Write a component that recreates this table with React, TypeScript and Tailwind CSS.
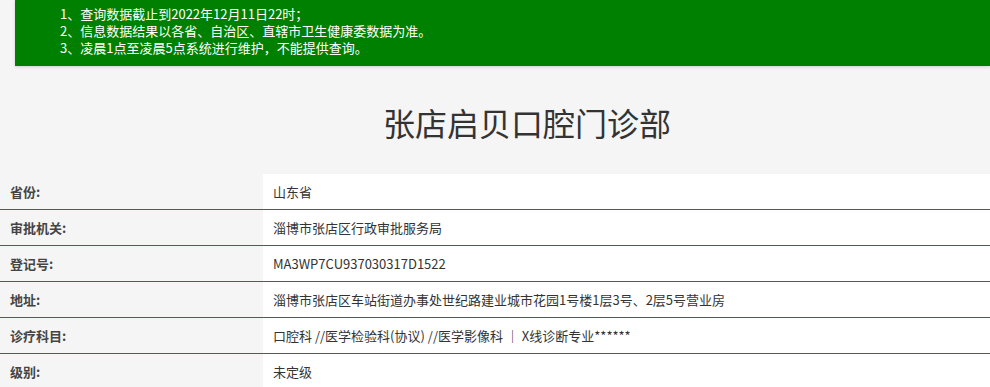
import React from 'react';

const notes = [
  '1、查询数据截止到2022年12月11日22时；',
  '2、信息数据结果以各省、自治区、直辖市卫生健康委数据为准。',
  '3、凌晨1点至凌晨5点系统进行维护，不能提供查询。',
];

const rows = [
  { label: '省份:', value: '山东省' },
  { label: '审批机关:', value: '淄博市张店区行政审批服务局' },
  { label: '登记号:', value: 'MA3WP7CU937030317D1522' },
  { label: '地址:', value: '淄博市张店区车站街道办事处世纪路建业城市花园1号楼1层3号、2层5号营业房' },
  { label: '诊疗科目:', value: '口腔科 //医学检验科(协议) //医学影像科 ｜ X线诊断专业******' },
  { label: '级别:', value: '未定级' },
];

export default function App() {
  return (
    <div
      className="min-h-[387px] bg-[#f5f5f5] text-[#333]"
      style={{ fontFamily: '"Noto Sans CJK SC", "Noto Sans", sans-serif' }}
    >
      {/* 提示栏 */}
      <div className="ml-[15px] h-[66px] bg-[#008000] pt-[5px] pl-[45px] text-[13px] leading-[17px] text-white shadow-[0_1px_3px_rgba(0,0,0,0.15)]">
        {notes.map(n => (
          <div key={n}>{n}</div>
        ))}
      </div>

      <h1 className="mt-[36px] pl-[64px] text-center text-[32px] leading-[40px] font-normal text-[#333]">
        张店启贝口腔门诊部
      </h1>

      {/* 信息表 */}
      <div className="mt-[32px]">
        {rows.map((r, i) => (
          <div
            key={r.label}
            className={`flex h-[35px] box-content text-[13px] ${i > 0 ? 'border-t border-[#2e6e52]' : ''}`}
          >
            <div className="flex w-[263px] shrink-0 items-center pl-[10px] font-bold text-[#444]">{r.label}</div>
            <div className="flex flex-1 items-center bg-white pl-[10px]">{r.value}</div>
          </div>
        ))}
      </div>
    </div>
  );
}
